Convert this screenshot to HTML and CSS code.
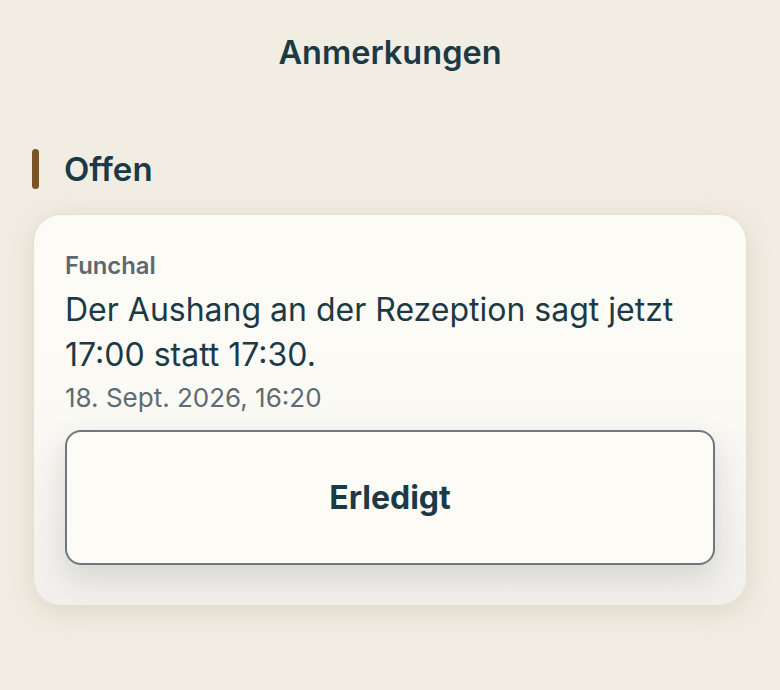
FILE: index.html
```html
<!DOCTYPE html>
<html lang="de">
<head>
<meta charset="utf-8">
<title>Anmerkungen</title>
<link rel="stylesheet" href="styles.css">
</head>
<body>
<header class="topbar">
  <h1 class="title">Anmerkungen</h1>
</header>
<main class="content">
  <section class="group">
    <h2 class="group-head"><span class="group-bar"></span>Offen</h2>
    <article class="card">
      <div class="card-place">Funchal</div>
      <p class="card-text">Der Aushang an der Rezeption sagt jetzt 17:00 statt 17:30.</p>
      <div class="card-date">18. Sept. 2026, 16:20</div>
      <button class="done-btn" type="button">Erledigt</button>
    </article>
  </section>
</main>
</body>
</html>
```
FILE: styles.css
```css
html, body {
  margin: 0;
  padding: 0;
}
body {
  width: 780px;
  height: 690px;
  overflow: hidden;
  background: #f2ede3;
  font-family: Inter, "Noto Sans", sans-serif;
  color: #1b3a45;
}
.topbar {
  display: flex;
  justify-content: center;
  padding-top: 32px;
}
.title {
  margin: 0;
  font-size: 32.5px;
  font-weight: 600;
  line-height: 42px;
}
.content {
  padding: 0 33px;
}
.group-head {
  display: flex;
  align-items: center;
  gap: 25px;
  margin: 75px 0 0 0;
  font-size: 33px;
  font-weight: 600;
  line-height: 40px;
}
.group-bar {
  display: block;
  width: 7px;
  height: 40px;
  margin-left: -1px;
  border-radius: 4px;
  background: #7b5527;
}
.card {
  margin-top: 25px;
  padding: 36px 31px 40px 31px;
  border-radius: 28px;
  background: linear-gradient(#fdfbf6 0%, #fcfaf5 45%, #f0efeb 100%);
  border: 1px solid #e4dfd1;
  box-shadow: 0 6px 28px rgba(120, 105, 70, 0.18);
}
.card-place {
  font-size: 23.8px;
  font-weight: 600;
  line-height: 30px;
  color: #5b6872;
}
.card-text {
  margin: 6px 0 0 0;
  font-size: 32px;
  font-weight: 400;
  line-height: 45px;
  color: #1b3a45;
}
.card-date {
  margin-top: 5px;
  font-size: 26px;
  line-height: 32px;
  color: #5f6b73;
}
.done-btn {
  display: flex;
  align-items: center;
  justify-content: center;
  width: 100%;
  height: 135px;
  margin-top: 16px;
  border: 2.5px solid #6d7880;
  border-radius: 16px;
  background: #fdfbf5;
  font-family: inherit;
  font-size: 32px;
  font-weight: 700;
  color: #1b3a45;
  box-shadow: 0 12px 30px rgba(60, 60, 50, 0.16);
}
```
